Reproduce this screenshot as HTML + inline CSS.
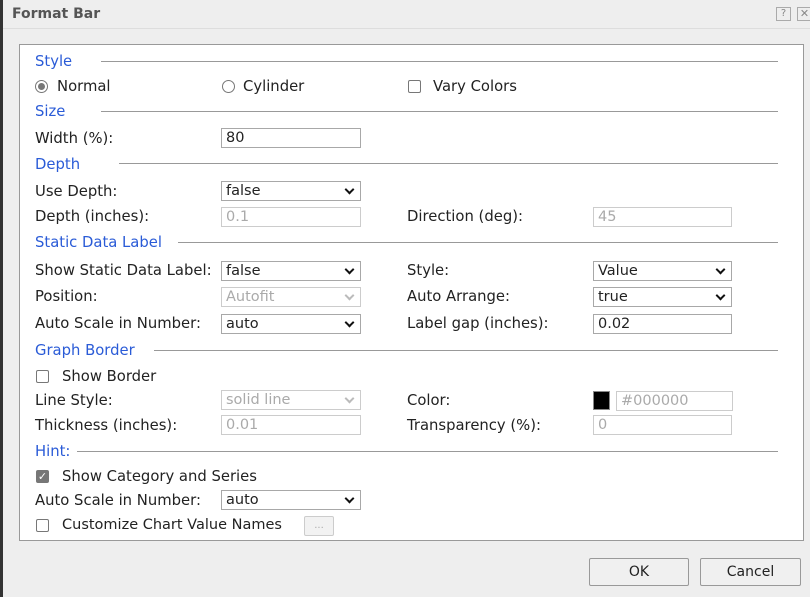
<!DOCTYPE html>
<html><head><style>
*{box-sizing:border-box;margin:0;padding:0}
body{width:810px;height:597px;background:#eeeeee;position:relative;overflow:hidden;font-family:"DejaVu Sans","Liberation Sans",sans-serif;font-size:14.8px;color:#222}
.a{position:absolute;white-space:nowrap;line-height:18px;margin-top:0px}
.h{color:#2a5bd7}
.ln{position:absolute;height:1px;background:#999}
.in{position:absolute;height:20px;border:1px solid #a8a8a8;background:#fff;padding:0 4px;line-height:18px;width:140px;font-size:14.5px}
.dis{color:#aaa;border-color:#ccc}
.sel:after{content:"";position:absolute;right:7px;top:4px;width:5px;height:5px;border-right:2px solid #111;border-bottom:2px solid #111;transform:rotate(45deg)}
.sel.dis:after{border-color:#bbb}
.cb{position:absolute;width:13px;height:13px;border:1px solid #777;border-radius:2px;background:#fff}
.btn{position:absolute;height:28px;border:1px solid #999;background:#f0f0f0;text-align:center;line-height:26px;font-size:14px;border-radius:2px}
</style></head><body>
<div style="position:absolute;left:0;top:0;width:3px;height:597px;background:#333"></div>
<div class="a" style="left:12px;top:5px;font-weight:bold;color:#555;font-size:14px">Format Bar</div>
<div style="position:absolute;left:3px;top:28px;width:807px;height:1px;background:#ddd"></div>
<div style="position:absolute;left:776px;top:7px;width:15px;height:14px;border:1px solid #aaa;font-size:10px;line-height:12px;text-align:center;color:#888">?</div>
<div style="position:absolute;left:797px;top:7px;width:15px;height:14px;border:1px solid #aaa;font-size:11px;line-height:12px;text-align:center;color:#888">✕</div>
<div style="position:absolute;left:19px;top:44px;width:785px;height:497px;background:#fff;border:1px solid #999"></div>

<div class="a h" style="left:35px;top:53px">Style</div><div class="ln" style="left:101px;top:61px;width:677px"></div>
<div style="position:absolute;left:35px;top:80px;width:13px;height:13px;border:1px solid #777;border-radius:50%;background:#fff"><div style="position:absolute;left:2px;top:2px;width:7px;height:7px;border-radius:50%;background:#777"></div></div>
<div class="a" style="left:57px;top:78px">Normal</div>
<div style="position:absolute;left:222px;top:80px;width:13px;height:13px;border:1px solid #777;border-radius:50%;background:#fff"></div>
<div class="a" style="left:243px;top:78px">Cylinder</div>
<div class="cb" style="left:408px;top:80px"></div>
<div class="a" style="left:433px;top:78px">Vary Colors</div>

<div class="a h" style="left:35px;top:103px">Size</div><div class="ln" style="left:101px;top:111px;width:677px"></div>
<div class="a" style="left:35px;top:130px">Width (%):</div>
<div class="in" style="left:221px;top:128px">80</div>

<div class="a h" style="left:35px;top:156px">Depth</div><div class="ln" style="left:119px;top:163px;width:659px"></div>
<div class="a" style="left:35px;top:183px">Use Depth:</div>
<div class="in sel" style="left:221px;top:181px">false</div>
<div class="a" style="left:35px;top:208px">Depth (inches):</div>
<div class="in dis" style="left:221px;top:207px">0.1</div>
<div class="a" style="left:407px;top:208px">Direction (deg):</div>
<div class="in dis" style="left:593px;top:207px;width:139px">45</div>

<div class="a h" style="left:35px;top:234px">Static Data Label</div><div class="ln" style="left:178px;top:242px;width:600px"></div>
<div class="a" style="left:35px;top:262px">Show Static Data Label:</div>
<div class="in sel" style="left:221px;top:261px">false</div>
<div class="a" style="left:407px;top:262px">Style:</div>
<div class="in sel" style="left:593px;top:261px;width:139px">Value</div>
<div class="a" style="left:35px;top:288px">Position:</div>
<div class="in sel dis" style="left:221px;top:287px">Autofit</div>
<div class="a" style="left:407px;top:288px">Auto Arrange:</div>
<div class="in sel" style="left:593px;top:287px;width:139px">true</div>
<div class="a" style="left:35px;top:315px">Auto Scale in Number:</div>
<div class="in sel" style="left:221px;top:314px">auto</div>
<div class="a" style="left:407px;top:315px">Label gap (inches):</div>
<div class="in" style="left:593px;top:314px;width:139px">0.02</div>

<div class="a h" style="left:35px;top:342px">Graph Border</div><div class="ln" style="left:154px;top:350px;width:624px"></div>
<div class="cb" style="left:36px;top:370px"></div>
<div class="a" style="left:62px;top:368px">Show Border</div>
<div class="a" style="left:35px;top:392px">Line Style:</div>
<div class="in sel dis" style="left:221px;top:390px">solid line</div>
<div class="a" style="left:407px;top:392px">Color:</div>
<div style="position:absolute;left:593px;top:391px;width:17px;height:19px;background:#000;border:1px solid #888"></div>
<div class="in dis" style="left:616px;top:391px;width:117px">#000000</div>
<div class="a" style="left:35px;top:417px">Thickness (inches):</div>
<div class="in dis" style="left:221px;top:415px">0.01</div>
<div class="a" style="left:407px;top:417px">Transparency (%):</div>
<div class="in dis" style="left:593px;top:415px;width:139px">0</div>

<div class="a h" style="left:35px;top:443px">Hint:</div><div class="ln" style="left:77px;top:451px;width:701px"></div>
<div class="cb" style="left:36px;top:470px;background:#777;border-color:#777;color:#fff;font-size:11px;line-height:11px;text-align:center">✓</div>
<div class="a" style="left:62px;top:468px">Show Category and Series</div>
<div class="a" style="left:35px;top:492px">Auto Scale in Number:</div>
<div class="in sel" style="left:221px;top:490px">auto</div>
<div class="cb" style="left:36px;top:519px"></div>
<div class="a" style="left:62px;top:516px;font-size:14.5px">Customize Chart Value Names</div>
<div style="position:absolute;left:304px;top:516px;width:30px;height:20px;border:1px solid #ccc;background:#f2f2f2;border-radius:2px;color:#aaa;font-size:10px;text-align:center;line-height:18px">...</div>

<div class="btn" style="left:589px;top:558px;width:100px">OK</div>
<div class="btn" style="left:700px;top:558px;width:101px">Cancel</div>
</body></html>
